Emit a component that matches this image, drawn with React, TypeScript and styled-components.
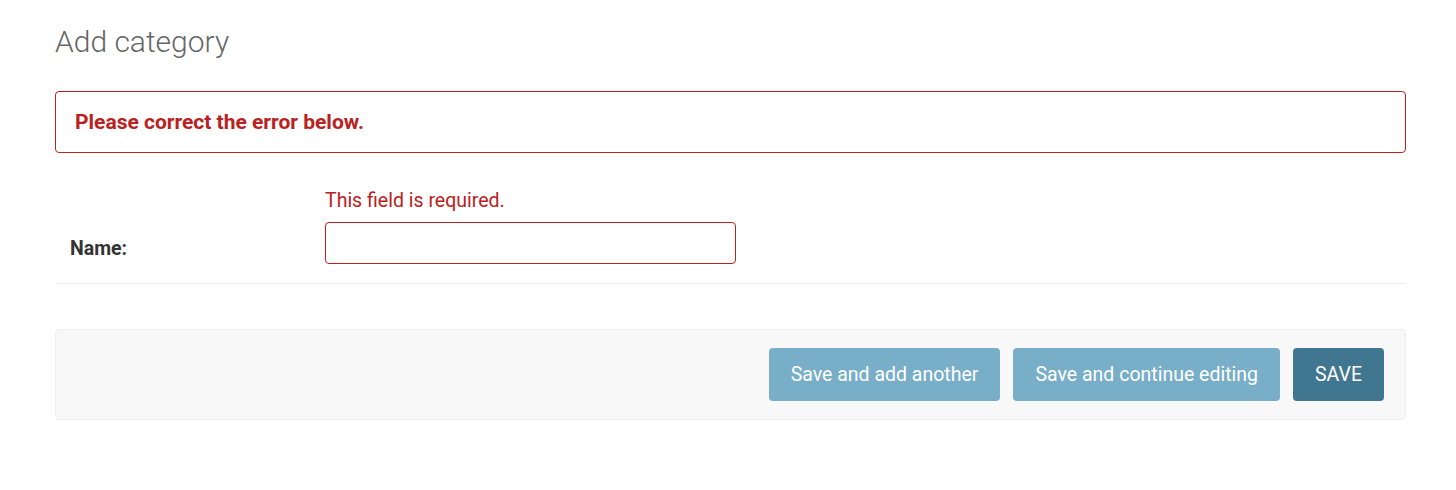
import styled, { createGlobalStyle } from "styled-components";

const GlobalStyle = createGlobalStyle`
  body {
    margin: 0;
    background: #fff;
    font-family: Roboto, "Liberation Sans", sans-serif;
    color: #333;
  }
`;

const Page = styled.div`
  padding: 22px 50px 0 55px;
`;

const Title = styled.h1`
  margin: 0 0 29px 0;
  font-size: 30px;
  font-weight: 300;
  color: #666;
  line-height: 40px;
`;

const ErrorNote = styled.p`
  margin: 0;
  height: 62px;
  box-sizing: border-box;
  display: flex;
  align-items: center;
  padding: 0 19px;
  border: 1px solid #ba2121;
  border-radius: 4px;
  color: #ba2121;
  font-size: 21px;
  font-weight: 700;
`;

const FormRow = styled.div`
  display: flex;
  align-items: flex-end;
  padding: 16px 15px 19px 15px;
  margin-top: 20px;
  border-bottom: 1px solid #eee;
`;

const Label = styled.label`
  width: 255px;
  font-size: 19.5px;
  font-weight: 700;
  color: #333;
  line-height: 42px;
  margin-bottom: -6px;
`;

const Field = styled.div`
  display: flex;
  flex-direction: column;
`;

const FieldError = styled.div`
  color: #ba2121;
  font-size: 19.5px;
  line-height: 24px;
  margin-bottom: 9px;
`;

const Input = styled.input`
  width: 411px;
  height: 42px;
  box-sizing: border-box;
  border: 1px solid #ba2121;
  border-radius: 4px;
  padding: 5px 8px;
  font-size: 16px;
  font-family: inherit;
  outline: none;
`;

const SubmitRow = styled.div`
  margin-top: 45px;
  display: flex;
  justify-content: flex-end;
  gap: 13px;
  padding: 18px 21px 18px 20px;
  background: #f8f8f8;
  border: 1px solid #eee;
  border-radius: 4px;
`;

const Button = styled.button<{ $primary?: boolean }>`
  height: 53px;
  padding: 0 22px;
  border: none;
  border-radius: 4px;
  background: ${({ $primary }) => ($primary ? "#417690" : "#79aec8")};
  color: #fff;
  font-family: inherit;
  font-size: 19.5px;
  cursor: pointer;
`;

export default function App() {
  return (
    <>
      <GlobalStyle />
      <Page>
        <Title>Add category</Title>
        <ErrorNote>Please correct the error below.</ErrorNote>
        <FormRow>
          <Label htmlFor="id_name">Name:</Label>
          <Field>
            <FieldError>This field is required.</FieldError>
            <Input id="id_name" type="text" />
          </Field>
        </FormRow>
        <SubmitRow>
          <Button>Save and add another</Button>
          <Button>Save and continue editing</Button>
          <Button $primary>SAVE</Button>
        </SubmitRow>
      </Page>
    </>
  );
}
